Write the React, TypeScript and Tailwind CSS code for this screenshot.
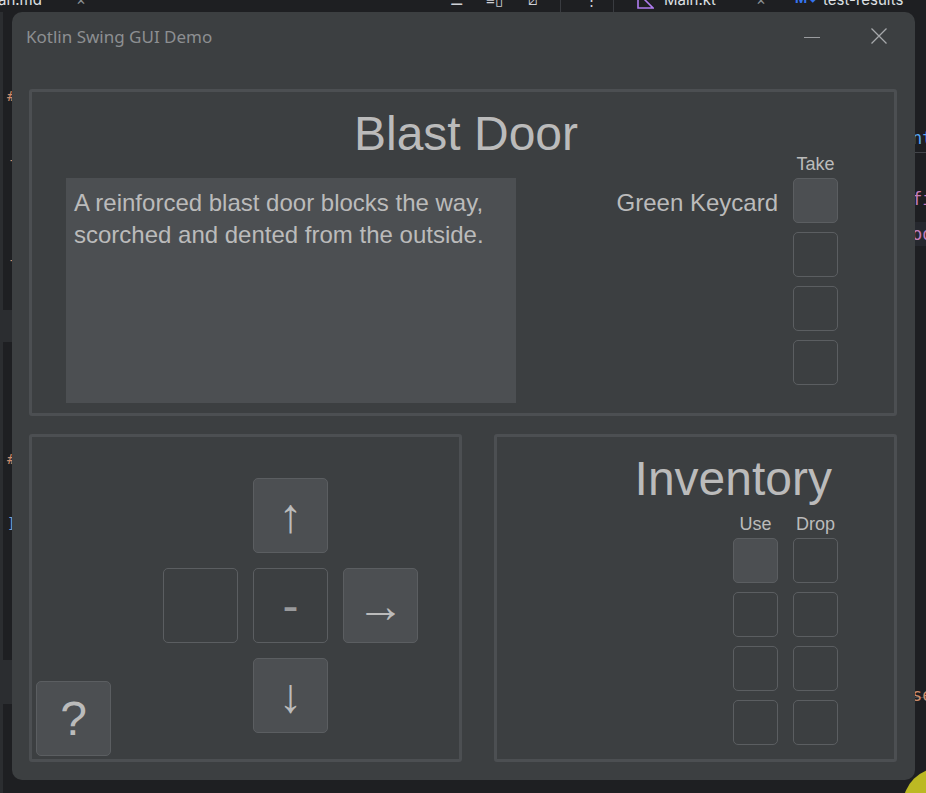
import React from 'react';

const txt = 'text-[#bbbbbb]';

function Slot({ filled }: { filled?: boolean }) {
  return (
    <div
      className={
        filled
          ? 'w-[45px] h-[45px] rounded-[5px] border border-[#5b5e61] bg-[#4c4f52]'
          : 'w-[45px] h-[45px] rounded-[5px] border border-[#5b5e61]'
      }
    />
  );
}

function PadButton({ filled, dim, children }: { filled?: boolean; dim?: boolean; children?: React.ReactNode }) {
  return (
    <button
      className={
        (filled ? 'bg-[#4c4f52] ' : 'bg-transparent ') +
        'w-[75px] h-[75px] rounded-[5px] border border-[#5b5e61] flex items-center justify-center text-[48px] leading-none ' +
        (dim ? 'text-[#999a9c]' : 'text-[#bbbbbb]')
      }
    >
      {children}
    </button>
  );
}

function IdeBackdrop() {
  return (
    <>
      {/* tab strip peeking out at the top */}
      <div className="absolute left-0 top-0 w-[926px] h-[12px] overflow-hidden font-['Inter',sans-serif] text-[15px] text-[#dfe1e5]">
        <span className="absolute left-[-2px] top-[-11px]">an.md</span>
        <span className="absolute left-[76px] top-[-11px] text-[#8c8f94]">×</span>
        <span className="absolute left-[450px] top-[-11px] text-[#ced0d6]">☰</span>
        <span className="absolute left-[486px] top-[-11px] text-[#ced0d6]">≡▯</span>
        <span className="absolute left-[528px] top-[-11px] text-[#ced0d6]">⧄</span>
        <div className="absolute left-[560px] top-0 w-px h-[12px] bg-[#393b40]" />
        <span className="absolute left-[584px] top-[-11px] text-[#ced0d6]">⋮</span>
        <div className="absolute left-[613px] top-0 w-px h-[12px] bg-[#393b40]" />
        <svg className="absolute left-[636px] top-[-8px]" width="18" height="18" viewBox="0 0 18 18">
          <path d="M2 1 L2 16 L17 16 L9 8 Z" fill="none" stroke="#b07cf0" strokeWidth="1.6" />
        </svg>
        <span className="absolute left-[664px] top-[-11px]">Main.kt</span>
        <span className="absolute left-[756px] top-[-11px] text-[#8c8f94]">×</span>
        <span className="absolute left-[795px] top-[-11px] text-[#3574f0] font-bold text-[13px]">M↓</span>
        <span className="absolute left-[823px] top-[-11px]">test-results</span>
      </div>

      {/* gutter on the left */}
      <div className="absolute left-0 top-[12px] w-[3px] h-[781px] bg-[#2b2d30]" />
      <div className="absolute left-0 top-[310px] w-[12px] h-[32px] bg-[#2b2d30]" />
      <div className="absolute left-0 top-[660px] w-[12px] h-[44px] bg-[#2b2d30]" />
      <div className="absolute left-0 top-0 font-['DejaVu_Sans_Mono',monospace] text-[14px]">
        <span className="absolute left-[7px] top-[86px] text-[#cf8e6d]">#</span>
        <span className="absolute left-[8px] top-[150px] text-[#cf8e6d]">-</span>
        <span className="absolute left-[8px] top-[250px] text-[#cf8e6d]">-</span>
        <span className="absolute left-[7px] top-[449px] text-[#cf8e6d]">#</span>
        <span className="absolute left-[7px] top-[513px] text-[#6f9fd8]">]</span>
      </div>

      {/* editor strip on the right */}
      <div className="absolute left-[915px] top-[152px] w-[11px] h-px bg-[#43454a]" />
      <div className="absolute left-[915px] top-[222px] w-[11px] h-[24px] bg-[#26282e]" />
      <div className="absolute left-[915px] top-[697px] w-[11px] h-px bg-[#43454a]" />
      <div className="absolute left-0 top-0 font-['DejaVu_Sans_Mono',monospace] text-[17px]">
        <span className="absolute left-[912px] top-[126px] text-[#56a8f5]">nt</span>
        <span className="absolute left-[912px] top-[156px] w-[2px] h-[5px] bg-[#6a8759]" />
        <span className="absolute left-[912px] top-[187px] text-[#c77dbb]">fi</span>
        <span className="absolute left-[912px] top-[222px] text-[#c77dbb]">oo</span>
        <span className="absolute left-[912px] top-[258px] w-[2px] h-[5px] bg-[#6a8759]" />
        <span className="absolute left-[912px] top-[683px] text-[#cf8e6d]">se</span>
      </div>

      {/* yellow badge bottom right */}
      <div className="absolute left-[903px] top-[768px] w-[74px] h-[74px] rounded-full bg-[#bcb923]" />
    </>
  );
}

export default function App() {
  return (
    <div className="relative w-[926px] h-[793px] overflow-hidden bg-[#1e1f22]">
      <IdeBackdrop />

      <div className="absolute left-[12px] top-[12px] w-[903px] h-[768px] rounded-[10px] bg-[#3c3f41] flex flex-col font-['Liberation_Sans',Arial,sans-serif]">
        {/* title bar */}
        <div className="h-[48px] flex items-center pl-[14px] pr-[27px] shrink-0">
          <span className="font-['Noto_Sans',sans-serif] text-[17px] text-[#8d8f92] mt-[2px]">Kotlin Swing GUI Demo</span>
          <svg className="ml-auto" width="18" height="18" viewBox="0 0 18 18">
            <line x1="1" y1="10.5" x2="17" y2="10.5" stroke="#9a9c9f" strokeWidth="1" />
          </svg>
          <svg className="ml-[49px]" width="18" height="18" viewBox="0 0 18 18">
            <path d="M1.5 1.5 L16.5 16.5 M16.5 1.5 L1.5 16.5" stroke="#a6a8ab" strokeWidth="1.3" />
          </svg>
        </div>

        <div className="flex flex-col px-[17px] pr-[18px] pt-[29px]">
          {/* room panel */}
          <section className="h-[327px] border-[3px] border-[#4c4f52] rounded-[3px] flex flex-col">
            <h1 className={`mt-[18px] h-[48px] pl-[6px] text-center text-[48px] leading-[48px] ${txt}`}>Blast Door</h1>
            <div className="flex items-start">
              <div className={`ml-[34px] mt-[20px] w-[450px] h-[225px] bg-[#4c4f52] pt-[9px] pl-[8px] text-[24px] leading-[32px] ${txt}`}>
                A reinforced blast door blocks the way,
                <br />
                scorched and dented from the outside.
              </div>
              <div className="ml-auto mr-[56px] mt-[-4px] flex items-start">
                <span className={`mt-[35px] mr-[15px] text-[24px] leading-[28px] ${txt}`}>Green Keycard</span>
                <div className="flex flex-col items-center w-[45px]">
                  <span className={`text-[18px] leading-[20px] mb-[4px] ${txt}`}>Take</span>
                  <div className="flex flex-col gap-[9px]">
                    <Slot filled />
                    <Slot />
                    <Slot />
                    <Slot />
                  </div>
                </div>
              </div>
            </div>
          </section>

          <div className="flex mt-[18px] gap-[32px]">
            {/* movement panel */}
            <section className="w-[433px] h-[328px] border-[3px] border-[#4c4f52] rounded-[3px] flex items-start">
              <div className="self-end mb-[3px] ml-[4px]">
                <PadButton filled>?</PadButton>
              </div>
              <div className="ml-[52px] mt-[41px] grid grid-cols-[75px_75px_75px] gap-[15px]">
                <div />
                <PadButton filled>↑</PadButton>
                <div />
                <PadButton />
                <PadButton dim>-</PadButton>
                <PadButton filled>→</PadButton>
                <div />
                <PadButton filled>↓</PadButton>
                <div />
              </div>
            </section>

            {/* inventory panel */}
            <section className="flex-1 h-[328px] border-[3px] border-[#4c4f52] rounded-[3px] flex flex-col items-end pr-[56px]">
              <h2 className={`mt-[18px] mr-[6px] text-[48px] leading-[48px] ${txt}`}>Inventory</h2>
              <div className="mt-[11px] flex gap-[15px] mb-[4px]">
                <span className={`w-[45px] text-center text-[18px] leading-[20px] ${txt}`}>Use</span>
                <span className={`w-[45px] text-center text-[18px] leading-[20px] ${txt}`}>Drop</span>
              </div>
              <div className="grid grid-cols-[45px_45px] gap-x-[15px] gap-y-[9px]">
                <Slot filled />
                <Slot />
                <Slot />
                <Slot />
                <Slot />
                <Slot />
                <Slot />
                <Slot />
              </div>
            </section>
          </div>
        </div>
      </div>
    </div>
  );
}
